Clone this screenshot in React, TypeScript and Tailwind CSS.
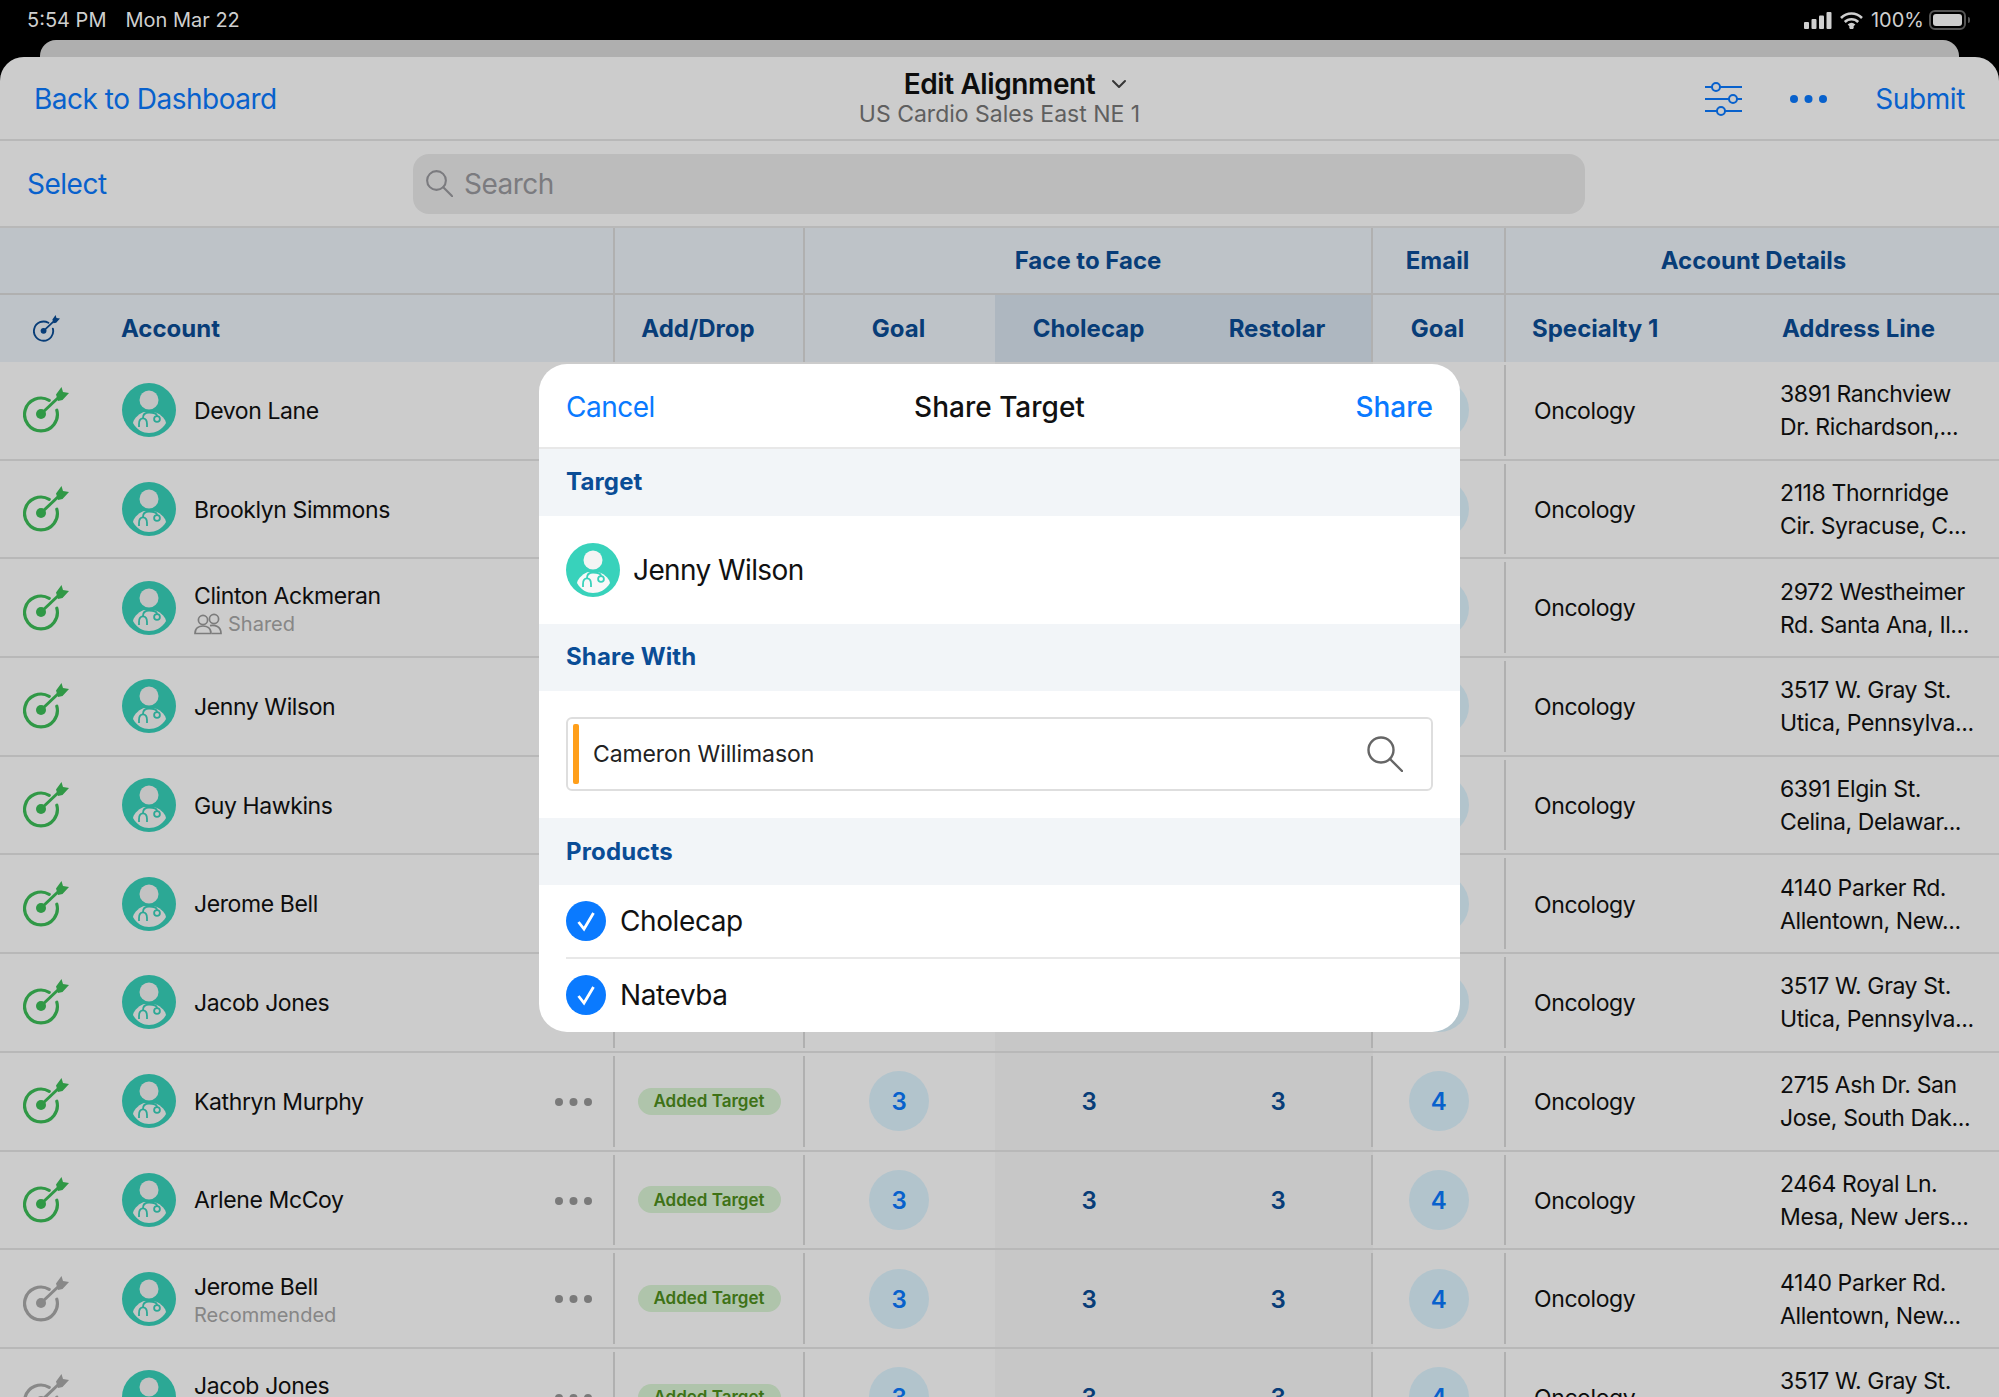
import { ChevronDown } from "lucide-react";

type Row = { name: string; sub?: string; shared?: boolean; grey?: boolean; addr: [string, string] };

const rows: Row[] = [
  { name: "Devon Lane", addr: ["3891 Ranchview", "Dr. Richardson,..."] },
  { name: "Brooklyn Simmons", addr: ["2118 Thornridge", "Cir. Syracuse, C..."] },
  { name: "Clinton Ackmeran", sub: "Shared", shared: true, addr: ["2972 Westheimer", "Rd. Santa Ana, Il..."] },
  { name: "Jenny Wilson", addr: ["3517 W. Gray St.", "Utica, Pennsylva..."] },
  { name: "Guy Hawkins", addr: ["6391 Elgin St.", "Celina, Delawar..."] },
  { name: "Jerome Bell", addr: ["4140 Parker Rd.", "Allentown, New..."] },
  { name: "Jacob Jones", addr: ["3517 W. Gray St.", "Utica, Pennsylva..."] },
  { name: "Kathryn Murphy", addr: ["2715 Ash Dr. San", "Jose, South Dak..."] },
  { name: "Arlene McCoy", addr: ["2464 Royal Ln.", "Mesa, New Jers..."] },
  { name: "Jerome Bell", sub: "Recommended", grey: true, addr: ["4140 Parker Rd.", "Allentown, New..."] },
  { name: "Jacob Jones", sub: "Recommended", grey: true, addr: ["3517 W. Gray St.", "Utica, Pennsylva..."] },
];

const cols = "grid grid-cols-[615px_190px_190px_190px_188px_133px_274px_219px]";

function TargetIcon({ color, size = 46 }: { color: string; size?: number }) {
  return (
    <svg width={size} height={size} viewBox="0 0 46 46" fill="none">
      <path d="M26.2 13.3A16.4 16.4 0 1 0 33.8 23.2" stroke={color} strokeWidth="3.2" strokeLinecap="round" />
      <circle cx="18" cy="27" r="5" fill={color} />
      <path d="M18 27L37 9" stroke={color} strokeWidth="3" />
      <path d="M33 7.5L38.5 0L40 5L46 6L39.5 13L35 14Z" fill={color} />
    </svg>
  );
}

function DoctorAvatar() {
  return (
    <svg width="54" height="54" viewBox="0 0 54 54" className="shrink-0">
      <circle cx="27" cy="27" r="27" fill="#38d2bb" />
      <circle cx="27" cy="17" r="9.5" fill="#f4f4f4" />
      <path d="M11 40C12 34 19 30 22 29H32C36 30 43 34 44 40C40 47 33 50 27 50C21 50 15 47 11 40Z" fill="#f8f8f8" />
      <path d="M21 35C21 31 24 29.5 27 29.5C31 29.5 35 30.5 35 33" stroke="#38d2bb" strokeWidth="1.8" fill="none" />
      <path d="M17 44V41C17 33.5 25 33.5 25 41V44" stroke="#38d2bb" strokeWidth="1.8" fill="none" />
      <circle cx="35" cy="36" r="2.9" stroke="#38d2bb" strokeWidth="1.8" fill="none" />
    </svg>
  );
}

function Dots({ color }: { color: string }) {
  return (
    <svg width="37" height="8" viewBox="0 0 37 8" fill={color}>
      <circle cx="4" cy="4" r="4" />
      <circle cx="18.5" cy="4" r="4" />
      <circle cx="33" cy="4" r="4" />
    </svg>
  );
}

function SlidersIcon() {
  return (
    <svg width="37" height="34" viewBox="0 0 37 34" fill="none" stroke="#0a7aff" strokeWidth="2">
      <path d="M0 5H7M15 5H37M0 17H24M32 17H37M0 29H12M20 29H37" />
      <circle cx="11" cy="5" r="4" />
      <circle cx="28" cy="17" r="4" />
      <circle cx="16" cy="29" r="4" />
    </svg>
  );
}

function SharedIcon() {
  return (
    <svg width="28" height="22" viewBox="0 0 28 22" fill="none" stroke="#9c9c9c" strokeWidth="1.7">
      <circle cx="9" cy="7" r="4.6" />
      <circle cx="20" cy="6" r="4.6" />
      <path d="M1 20.5C1 15 5 13 9 13C13 13 17 15 17 20.5Z" />
      <path d="M16 12.6C21 11.5 27 13.5 27 20.5H18" />
    </svg>
  );
}

function Magnifier({ size, color, stroke }: { size: number; color: string; stroke: number }) {
  return (
    <svg width={size} height={size} viewBox="0 0 36 36" fill="none" stroke={color} strokeWidth={stroke} strokeLinecap="round" className="shrink-0">
      <circle cx="14" cy="14" r="12.5" />
      <path d="M23 23L35 35" />
    </svg>
  );
}

function Sep() {
  return <div className="absolute right-0 top-[3px] bottom-[3px] w-[2px] bg-[#dcdcdc]" />;
}

function TableRow({ row }: { row: Row }) {
  return (
    <div className={`${cols} h-[98.7px] shrink-0 border-b-2 border-[#e6e6e6] text-[23px] tracking-[-0.4px] text-[#111]`}>
      <div className="relative flex items-center">
        <div className="w-[122px] pl-[23px]">
          <TargetIcon color={row.grey ? "#aaaaaa" : "#3cbf58"} />
        </div>
        <DoctorAvatar />
        <div className={`ml-[18px] flex flex-col leading-[28px] ${row.sub ? "pt-[5px]" : "pt-[1px]"}`}>
          <span>{row.name}</span>
          {row.sub && (
            <span className="flex items-center gap-[6px] text-[20px] leading-[28px] tracking-normal text-[#a8a8a8]">
              {row.shared && <SharedIcon />}
              {row.sub}
            </span>
          )}
        </div>
        <div className="absolute right-[23px] top-[45px]">
          <Dots color="#999999" />
        </div>
        <Sep />
      </div>
      <div className="relative flex items-center justify-center pr-[2px]">
        <span className="flex h-[27px] w-[143px] items-center justify-center rounded-full bg-[#dbf5d6] pt-[1px] text-[17px] font-semibold tracking-normal text-[#4e8f1c]">
          Added Target
        </span>
        <Sep />
      </div>
      <div className="flex items-center justify-center pr-[2px]">
        <span className="flex size-[60px] items-center justify-center rounded-full bg-[#dff6ff] pt-[2px] text-[24px] font-semibold text-[#0a7aff]">3</span>
      </div>
      <div className="flex items-center justify-center bg-[#f9f9f9] pr-[2px] pt-[2px] text-[24px] font-semibold text-[#0a4d96]">3</div>
      <div className="relative flex items-center justify-center bg-[#f9f9f9] pr-[2px] pt-[2px] text-[24px] font-semibold text-[#0a4d96]">
        3
        <Sep />
      </div>
      <div className="relative flex items-center justify-center pr-[2px]">
        <span className="flex size-[60px] items-center justify-center rounded-full bg-[#dff6ff] pt-[2px] text-[24px] font-semibold text-[#0a7aff]">4</span>
        <Sep />
      </div>
      <div className="flex items-center pl-[28px] pt-[2px]">Oncology</div>
      <div className="flex flex-col justify-center pt-[2px] leading-[33px]">
        <span>{row.addr[0]}</span>
        <span>{row.addr[1]}</span>
      </div>
    </div>
  );
}

function HeaderCell({ label, className = "" }: { label?: string; className?: string }) {
  return <div className={`flex items-center justify-center ${className}`}>{label}</div>;
}

function SectionHead({ label }: { label: string }) {
  return (
    <div className="flex h-[67px] items-center bg-[#f2f5f8] pl-[27px] text-[24px] font-bold tracking-[0.15px] text-[#0a4d96]">{label}</div>
  );
}

function ProductRow({ label, line }: { label: string; line?: boolean }) {
  return (
    <div className="flex h-[73.5px] flex-col pl-[27px]">
      <div className="flex flex-1 items-center gap-[14px]">
        <span className="flex size-[40px] items-center justify-center rounded-full bg-[#0a7aff]">
          <svg width="40" height="40" viewBox="0 0 40 40" fill="none" stroke="#ffffff" strokeWidth="2.8">
            <path d="M12.5 21L18 28L27.5 12" />
          </svg>
        </span>
        <span className="text-[28px] tracking-[-0.4px] text-[#111]">{label}</span>
      </div>
      {line && <div className="h-[2px] bg-[#e8e8e8]" />}
    </div>
  );
}

export default function App() {
  return (
    <div className="relative flex h-[1397px] w-[1999px] flex-col overflow-hidden bg-black font-[Inter,sans-serif]">
      {/* status bar */}
      <div className="flex h-[40px] shrink-0 items-center justify-between pl-[27px] pr-[29px] text-[20px] text-[#cfcfcf]">
        <div className="flex gap-[19px]">
          <span>5:54 PM</span>
          <span>Mon Mar 22</span>
        </div>
        <div className="flex items-center gap-[8px]">
          <svg width="28" height="17" viewBox="0 0 28 17" fill="#cfcfcf">
            <rect x="0" y="10" width="5" height="7" rx="1" />
            <rect x="7.5" y="7" width="5" height="10" rx="1" />
            <rect x="15" y="3.5" width="5" height="13.5" rx="1" />
            <rect x="22.5" y="0" width="5" height="17" rx="1" />
          </svg>
          <svg width="23" height="17" viewBox="0 0 23 17" fill="none" stroke="#cfcfcf" strokeWidth="2.6">
            <path d="M1 6C7 0 16 0 22 6" />
            <path d="M4.8 10C8.5 6.3 14.5 6.3 18.2 10" />
            <path d="M8.5 13.4C10.3 11.8 12.7 11.8 14.5 13.4" />
            <circle cx="11.5" cy="15" r="1" fill="#cfcfcf" />
          </svg>
          <span className="mr-[-3px]">100%</span>
          <div className="flex items-center gap-[2px]">
            <div className="flex h-[20px] w-[37px] rounded-[6px] border-2 border-[#555] p-[2px]">
              <div className="flex-1 rounded-[3px] bg-[#cfcfcf]" />
            </div>
            <div className="h-[6px] w-[2px] rounded-r bg-[#555]" />
          </div>
        </div>
      </div>

      <div className="mx-[40px] h-[17px] shrink-0 rounded-t-[16px] bg-[#afafaf]" />

      {/* sheet */}
      <div className="relative flex min-h-0 flex-1 flex-col overflow-hidden rounded-t-[24px] bg-white">
        <div className="grid h-[84px] shrink-0 grid-cols-3 items-center border-b-2 border-[#e6e6e6] px-[34px] pt-[2px] text-[28px] tracking-[-0.5px] text-[#0a7aff]">
          <span>Back to Dashboard</span>
          <div className="mt-[-3px] flex flex-col items-center">
            <span className="ml-[36px] flex items-center gap-[12px] text-[28px] leading-[34px] font-semibold tracking-[-0.4px] text-[#111]">
              Edit Alignment
              <ChevronDown size={24} color="#444" />
            </span>
            <span className="text-[23px] leading-[27px] tracking-normal text-[#777]">US Cardio Sales East NE 1</span>
          </div>
          <div className="flex items-center justify-end gap-[48px]">
            <SlidersIcon />
            <Dots color="#0a7aff" />
            <span className="tracking-[-0.4px]">Submit</span>
          </div>
        </div>

        <div className="flex h-[87px] shrink-0 items-center border-b-2 border-[#e6e6e6] text-[28px] tracking-[-0.5px]">
          <span className="w-[413px] pl-[27px] text-[#0a7aff]">Select</span>
          <div className="flex h-[60px] w-[1172px] items-center gap-[11px] rounded-[16px] bg-[#ececec] pl-[13px] text-[#9a9a9f]">
            <Magnifier size={27} color="#9a9a9f" stroke={2.8} />
            Search
          </div>
        </div>

        {/* group header */}
        <div className="h-[67px] shrink-0 grid grid-cols-[615px_190px_568px_133px_493px] border-b-2 border-[#dcdcdc] bg-[#eef4fa] text-[24px] font-bold text-[#0a4d96]">
          <HeaderCell className="border-r-2 border-[#dcdcdc]" />
          <HeaderCell className="border-r-2 border-[#dcdcdc]" />
          <HeaderCell label="Face to Face" className="border-r-2 border-[#dcdcdc]" />
          <HeaderCell label="Email" className="border-r-2 border-[#dcdcdc] pr-[2px]" />
          <HeaderCell label="Account Details" className="pl-[2px]" />
        </div>

        {/* column header */}
        <div className={`${cols} h-[67px] shrink-0 bg-[#eef4fa] text-[24px] font-bold text-[#0a4d96]`}>
          <div className="flex items-center border-r-2 border-[#dcdcdc]">
            <div className="flex w-[121px] pl-[33px]">
              <TargetIcon color="#0a4d96" size={27} />
            </div>
            <span>Account</span>
          </div>
          <HeaderCell label="Add/Drop" className="border-r-2 border-[#dcdcdc] pr-[22px]" />
          <HeaderCell label="Goal" className="pr-[3px]" />
          <HeaderCell label="Cholecap" className="bg-[#dae5f1] pr-[3px]" />
          <HeaderCell label="Restolar" className="bg-[#dae5f1] border-r-2 border-[#dcdcdc] pr-[2px]" />
          <HeaderCell label="Goal" className="border-r-2 border-[#dcdcdc] pr-[2px]" />
          <div className="flex items-center pl-[26px]">Specialty 1</div>
          <div className="flex items-center pl-[2px]">Address Line</div>
        </div>

        {rows.map((row, i) => (
          <TableRow key={i} row={row} />
        ))}

        <div className="absolute inset-0 bg-black/20" />
      </div>

      {/* share target dialog */}
      <div className="absolute left-[539px] top-[364px] flex h-[668px] w-[921px] flex-col overflow-hidden rounded-[28px] bg-white">
        <div className="grid h-[85px] grid-cols-3 items-center border-b-2 border-[#e8e8e8] px-[27px] pt-[4px] text-[28px] text-[#0a7aff]">
          <span className="tracking-[-0.5px]">Cancel</span>
          <span className="text-center font-medium text-[#111]">Share Target</span>
          <span className="text-right font-medium">Share</span>
        </div>
        <SectionHead label="Target" />
        <div className="flex h-[108px] items-center gap-[13px] pl-[27px] text-[28px] tracking-[-0.6px] text-[#111]">
          <DoctorAvatar />
          Jenny Wilson
        </div>
        <SectionHead label="Share With" />
        <div className="flex h-[128px] items-center px-[27px]">
          <div className="flex h-[74px] flex-1 items-center rounded-[6px] border-2 border-[#dedede] pl-[5px] pr-[28px]">
            <div className="h-[60px] w-[6px] rounded-[2px] bg-[#ff9f1a]" />
            <span className="ml-[14px] flex-1 text-[23px] tracking-[-0.1px] text-[#222]">Cameron Willimason</span>
            <Magnifier size={36} color="#666666" stroke={2.4} />
          </div>
        </div>
        <SectionHead label="Products" />
        <ProductRow label="Cholecap" line />
        <ProductRow label="Natevba" />
      </div>
    </div>
  );
}
